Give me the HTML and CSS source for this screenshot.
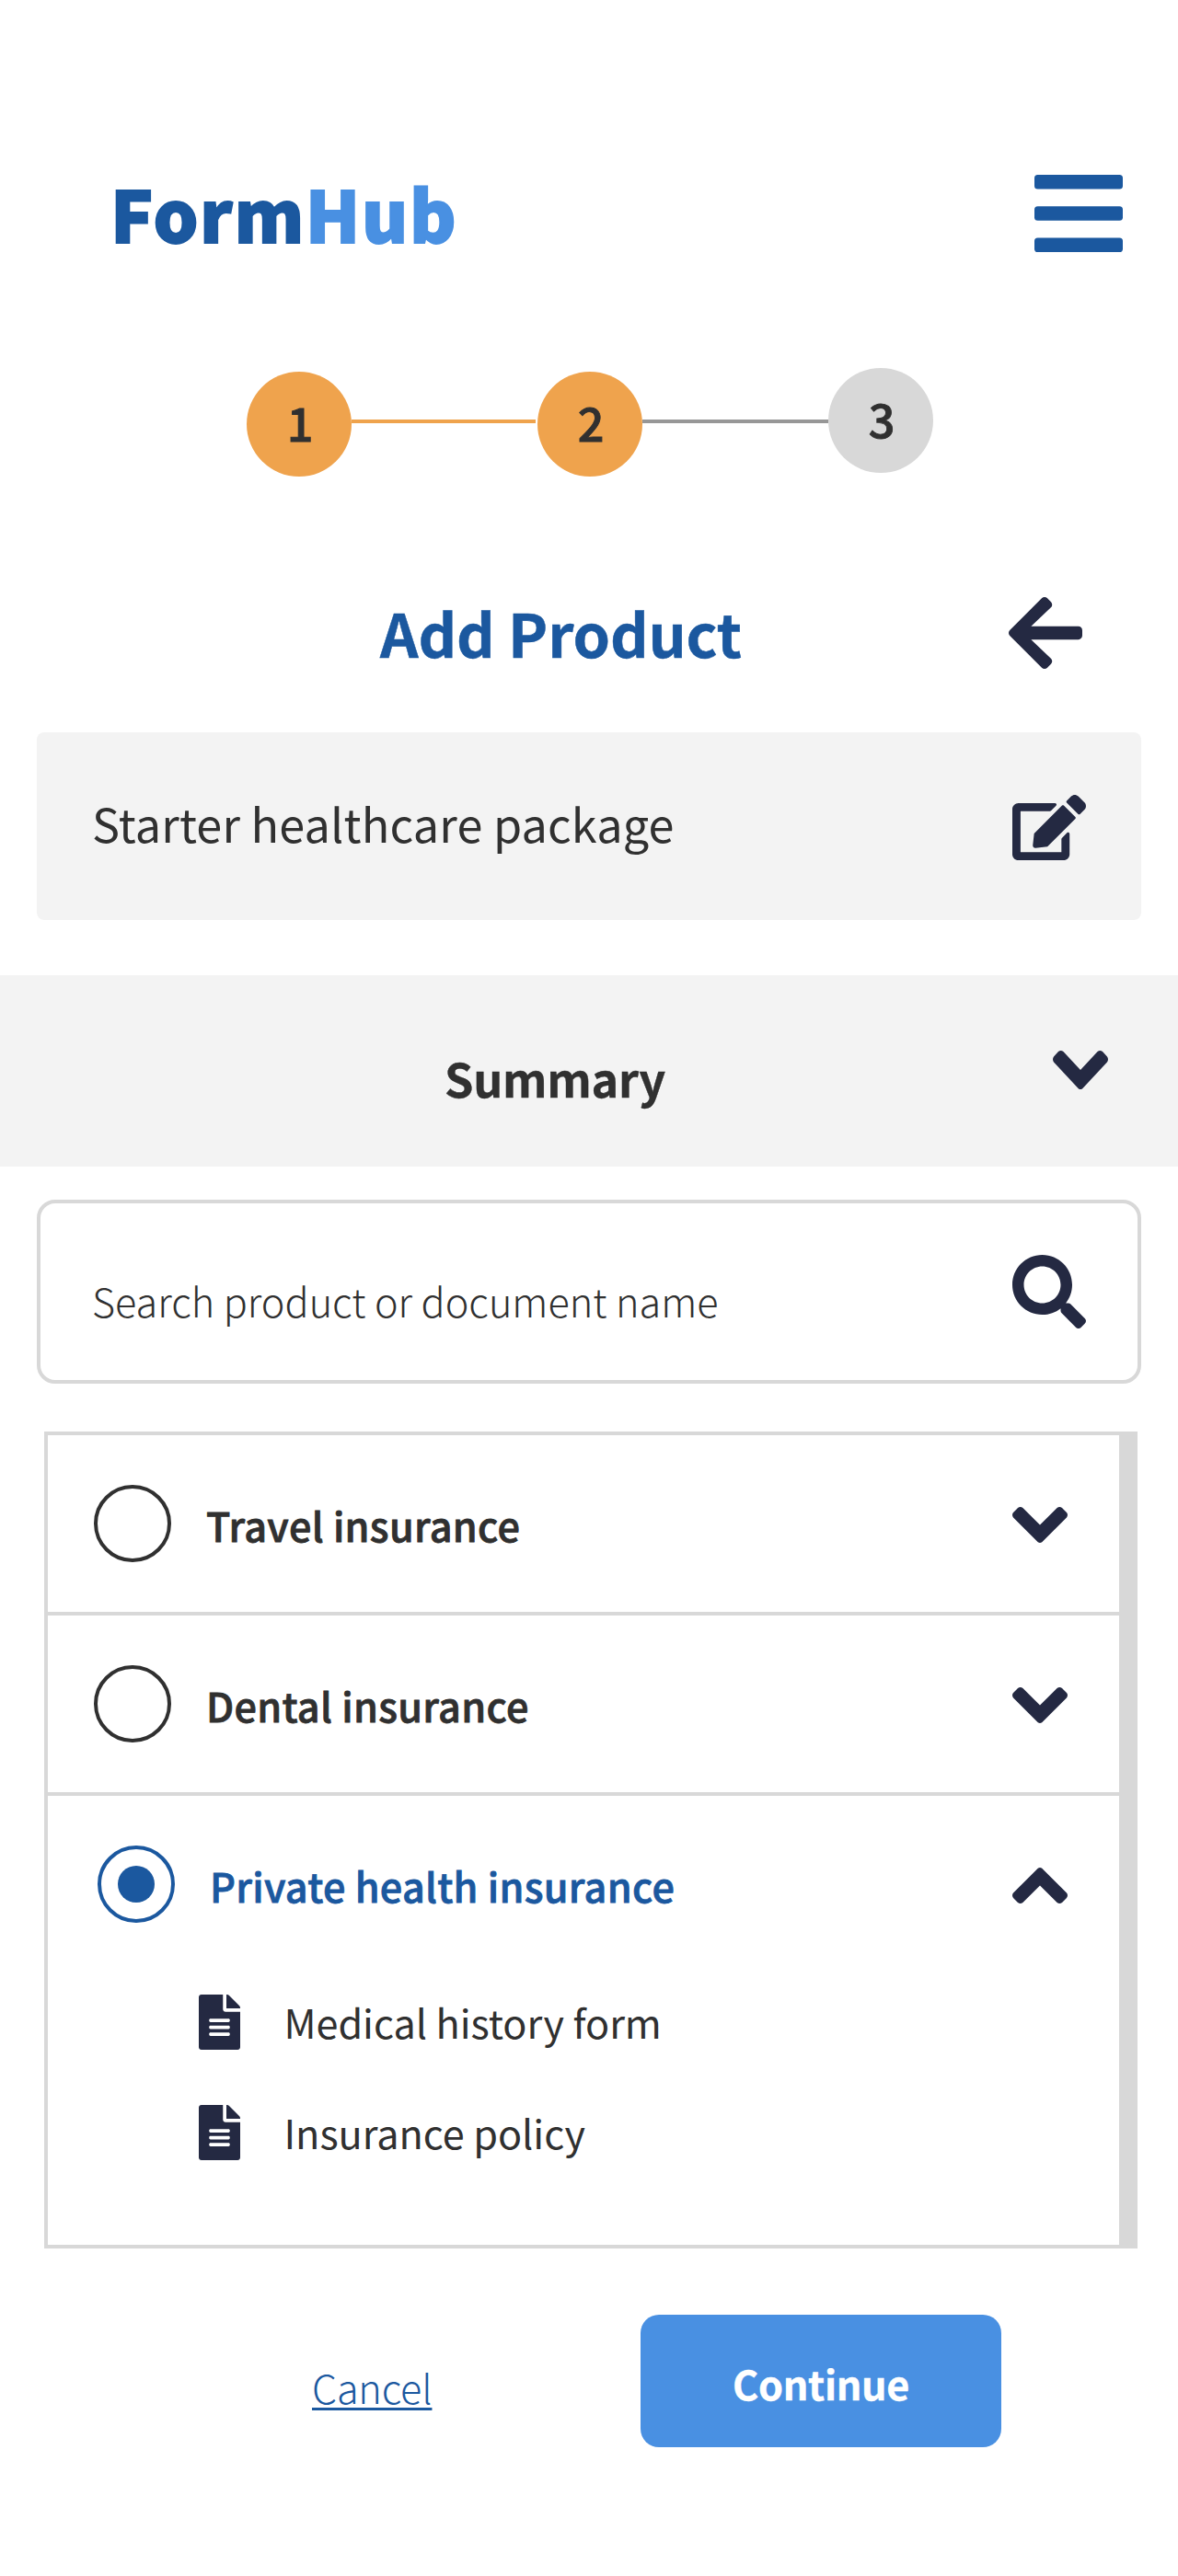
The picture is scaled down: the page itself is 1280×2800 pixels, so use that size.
FILE: index.html
```html
<!DOCTYPE html>
<html lang="en">
<head>
<meta charset="utf-8">
<title>FormHub – Add Product</title>
<link rel="stylesheet" href="styles.css">
</head>
<body>
<svg class="defs" aria-hidden="true">
  <symbol id="chevron" viewBox="0 0 60 39" preserveAspectRatio="none"><path d="M30 19.5L11.4 1Q8.7-1 6 1L1 6.1Q-1 8.8 1 11.5L27.8 38.2Q30 39.8 32.2 38.2L59 11.5Q61 8.8 59 6.1L54 1Q51.3-1 48.6 1Z"/></symbol>
  <symbol id="file" viewBox="0 0 384 512"><path d="M224 136V0H24C10.7 0 0 10.7 0 24v464c0 13.3 10.7 24 24 24h336c13.3 0 24-10.7 24-24V160H248c-13.2 0-24-10.8-24-24zm64 236c0 6.6-5.4 12-12 12H108c-6.6 0-12-5.4-12-12v-8c0-6.6 5.4-12 12-12h168c6.6 0 12 5.4 12 12v8zm0-64c0 6.6-5.4 12-12 12H108c-6.6 0-12-5.4-12-12v-8c0-6.6 5.4-12 12-12h168c6.6 0 12 5.4 12 12v8zm0-72v8c0 6.6-5.4 12-12 12H108c-6.6 0-12-5.4-12-12v-8c0-6.6 5.4-12 12-12h168c6.6 0 12 5.4 12 12zm96-114.1v6.1H256V0h6.1c6.4 0 12.5 2.5 17 7l97.9 98c4.5 4.5 7 10.6 7 16.9z"/></symbol>
</svg>
<header class="header">
  <div class="logo">Form<span class="logo-accent">Hub</span></div>
  <svg class="menu" viewBox="0 0 96 84"><rect width="96" height="15.6" rx="3.6"/><rect y="34.2" width="96" height="15.6" rx="3.6"/><rect y="68.4" width="96" height="15.6" rx="3.6"/></svg>
</header>
<nav class="steps">
  <span class="step step-done">1</span>
  <span class="step-line step-line-done"></span>
  <span class="step step-done">2</span>
  <span class="step-line"></span>
  <span class="step">3</span>
</nav>
<main>
  <div class="title-row">
    <h1 class="title">Add Product</h1>
    <svg class="back" viewBox="0 37.6 448 436.8"><path d="M257.5 445.1l-22.2 22.2c-9.4 9.4-24.6 9.4-33.9 0L7 273c-9.4-9.4-9.4-24.6 0-33.9L201.4 44.7c9.4-9.4 24.6-9.4 33.9 0l22.2 22.2c9.5 9.5 9.3 25-.4 34.3L136.6 216H424c13.3 0 24 10.7 24 24v32c0 13.3-10.7 24-24 24H136.6l120.5 114.8c9.8 9.3 10 24.8.4 34.3z"/></svg>
  </div>
  <section class="package">
    <span class="package-name">Starter healthcare package</span>
    <svg class="edit" viewBox="0 0 576 512"><path d="M402.6 83.2l90.2 90.2c3.8 3.8 3.8 10 0 13.8L274.4 405.6l-92.8 10.3c-12.4 1.4-22.9-9.1-21.5-21.5l10.3-92.8L388.8 83.2c3.8-3.8 10-3.8 13.8 0zm162-22.9l-48.8-48.8c-15.2-15.2-39.9-15.2-55.2 0l-35.4 35.4c-3.8 3.8-3.8 10 0 13.8l90.2 90.2c3.8 3.8 10 3.8 13.8 0l35.4-35.4c15.2-15.3 15.2-40 0-55.2zM384 346.2V448H64V128h229.8c3.2 0 6.2-1.3 8.5-3.5l40-40c7.6-7.6 2.2-20.5-8.5-20.5H48C21.5 64 0 85.5 0 112v352c0 26.5 21.5 48 48 48h352c26.5 0 48-21.5 48-48V306.2c0-10.7-12.9-16-20.5-8.5l-40 40c-2.2 2.3-3.5 5.3-3.5 8.5z"/></svg>
  </section>
  <section class="summary">
    <h2 class="summary-title">Summary</h2>
    <svg class="summary-chevron"><use href="#chevron"/></svg>
  </section>
  <div class="search">
    <span class="search-hint">Search product or document name</span>
    <svg class="search-icon" viewBox="0 0 512 512"><path d="M505 442.7L405.3 343c-4.5-4.5-10.6-7-17-7H372c27.6-35.3 44-79.7 44-128C416 93.1 322.9 0 208 0S0 93.1 0 208s93.1 208 208 208c48.3 0 92.7-16.4 128-44v16.3c0 6.4 2.5 12.5 7 17l99.7 99.7c9.4 9.4 24.6 9.4 33.9 0l28.3-28.3c9.4-9.4 9.4-24.6.1-34zM208 336c-70.7 0-128-57.2-128-128 0-70.7 57.2-128 128-128 70.7 0 128 57.2 128 128 0 70.7-57.2 128-128 128z"/></svg>
  </div>
  <div class="list">
    <ul class="products">
      <li class="product">
        <div class="product-head"><span class="radio"></span><span class="product-name">Travel insurance</span><svg class="chevron"><use href="#chevron"/></svg></div>
      </li>
      <li class="product">
        <div class="product-head"><span class="radio"></span><span class="product-name">Dental insurance</span><svg class="chevron"><use href="#chevron"/></svg></div>
      </li>
      <li class="product product-selected">
        <div class="product-head"><span class="radio"><span class="dot"></span></span><span class="product-name">Private health insurance</span><svg class="chevron chevron-up"><use href="#chevron"/></svg></div>
        <ul class="docs">
          <li class="doc"><svg class="file"><use href="#file"/></svg><span class="doc-name">Medical history form</span></li>
          <li class="doc"><svg class="file"><use href="#file"/></svg><span class="doc-name">Insurance policy</span></li>
        </ul>
      </li>
    </ul>
    <div class="scrollbar"></div>
  </div>
  <footer class="actions">
    <a class="cancel">Cancel</a>
    <button class="continue">Continue</button>
  </footer>
</main>
</body>
</html>
```
FILE: styles.css
```css
* { box-sizing: border-box; }
body {
  margin: 0;
  width: 1280px;
  height: 2800px;
  background: #fff;
  color: #303030;
  font-family: "Noto Sans CJK SC", "Noto Sans", sans-serif;
  font-size: 43.2px;
}
h1, h2, ul { margin: 0; padding: 0; list-style: none; }
svg { display: block; flex: none; fill: #242942; }
span, a { white-space: nowrap; }
.defs { display: none; }

.header { display: flex; justify-content: space-between; align-items: flex-start; height: 274px; padding: 190px 60px 0 120px; }
.logo { font-size: 77px; line-height: 81px; font-weight: 900; letter-spacing: 1.6px; color: #1b589f; -webkit-text-stroke: 1.8px currentColor; }
.logo-accent { color: #4990e2; }
.menu { width: 96px; height: 84px; fill: #1b589f; }

.steps { display: flex; align-items: flex-start; margin-top: 126px; padding-left: 268px; height: 118px; }
.step { width: 114px; height: 114px; border-radius: 50%; background: #d8d8d8; padding-left: 2px; text-align: center; font-size: 50.4px; line-height: 109px; font-weight: 500; -webkit-text-stroke: 0.9px currentColor; }
.step-done { margin-top: 4px; background: #efa34d; }
.step-line { width: 202px; height: 4px; margin-top: 56px; background: #979797; }
.step-line-done { width: 200px; margin-right: 2px; background: #efa34d; }

.title-row { display: flex; justify-content: space-between; margin-top: 131px; padding: 0 104px 0 413px; height: 78px; }
.title { font-size: 64.8px; line-height: 76px; font-weight: 700; letter-spacing: -0.15px; color: #1b589f; -webkit-text-stroke: 0.5px currentColor; }
.back { width: 80px; height: 78px; }

.package { display: flex; justify-content: space-between; align-items: flex-start; margin: 69px 40px 0; padding: 0 60px; height: 204px; border-radius: 8px; background: #f3f3f3; }
.package-name { font-size: 50.4px; line-height: 197px; letter-spacing: 0.15px; }
.edit { width: 80px; height: 71.1px; margin-top: 68px; }

.summary { display: flex; justify-content: space-between; align-items: flex-start; margin-top: 60px; padding: 0 76px 0 483px; height: 208px; background: #f3f3f3; }
.summary-title { padding-top: 22px; font-size: 50.4px; line-height: 180px; font-weight: 700; letter-spacing: -0.3px; -webkit-text-stroke: 0.4px currentColor; }
.summary-chevron { width: 60px; height: 42px; margin-top: 82px; }

.search { display: flex; justify-content: space-between; align-items: flex-start; margin: 36px 40px 0; padding: 0 56px; height: 200px; border: 4px solid #d8d8d8; border-radius: 20px; }
.search-hint { padding-top: 25px; line-height: 160px; font-weight: 300; }
.search-icon { width: 80px; height: 80px; margin-top: 56px; }

.list { display: flex; margin: 52px 44px 0 48px; height: 888px; border: 4px solid #d8d8d8; border-right: 0; }
.products { flex: 1; }
.scrollbar { width: 20px; background: #d8d8d8; }
.product + .product { border-top: 4px solid #d8d8d8; }
.product-head { display: flex; align-items: flex-start; height: 192px; padding: 0 56px 0 50px; }
.radio { display: flex; align-items: center; justify-content: center; flex: none; width: 84px; height: 84px; margin-top: 54px; border: 4px solid #303030; border-radius: 50%; }
.product-name { flex: 1; margin-left: 38px; padding-top: 17px; line-height: 160px; font-weight: 500; letter-spacing: 0.3px; -webkit-text-stroke: 0.8px currentColor; }
.chevron { width: 60px; height: 39px; margin-top: 78px; }
.chevron-up { transform: scaleY(-1); }
.product-selected .product-head { padding-left: 54px; }
.product-selected .radio { border-color: #1b589f; }
.product-selected .product-name { color: #1b589f; }
.dot { width: 40px; height: 40px; border-radius: 50%; background: #1b589f; }
.docs { display: flex; flex-direction: column; gap: 60px; padding: 24px 0 0 163.5px; }
.doc { display: flex; height: 60px; gap: 48px; }
.file { width: 45px; height: 60px; }
.doc-name { line-height: 58px; letter-spacing: -0.05px; }

.actions { display: flex; align-items: flex-start; justify-content: space-between; margin-top: 72px; padding: 0 192px 0 339px; }
.cancel { padding-top: 8px; line-height: 140px; font-weight: 300; letter-spacing: -0.2px; color: #1b589f; text-decoration: underline; text-decoration-thickness: 3px; text-underline-offset: 4px; text-decoration-skip-ink: none; }
.continue { width: 392px; height: 144px; padding: 4px 0 0; border: 0; border-radius: 20px; background: #4990e2; color: #fff; font: inherit; font-weight: 700; line-height: 140px; letter-spacing: -0.35px; -webkit-text-stroke: 0.4px currentColor; }
```
